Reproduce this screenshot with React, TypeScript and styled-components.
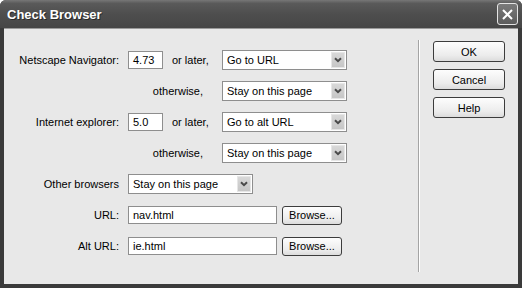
import styled, { createGlobalStyle } from 'styled-components';

const GlobalStyle = createGlobalStyle`
  html, body {
    margin: 0;
    padding: 0;
    background: #ffffff;
  }
  body {
    font-family: "Liberation Sans", Arial, sans-serif;
    font-size: 11px;
    color: #000;
  }
`;

const Window = styled.div`
  width: 522px;
  height: 288px;
  display: flex;
  flex-direction: column;
  background: #3a3a3a;
  border-radius: 6px 6px 0 0;
  overflow: hidden;
`;

const TitleBar = styled.div`
  height: 28px;
  flex: none;
  display: flex;
  align-items: center;
  justify-content: space-between;
  padding: 0 4px 0 7px;
  background: linear-gradient(#777777 0%, #5a5a5a 12%, #4e4e4e 50%, #464646 100%);
  color: #ffffff;
  font-family: "Liberation Sans", Arial, sans-serif;
  font-weight: bold;
  font-size: 13px;
  text-shadow: 1px 1px 0 #2a2a2a;
`;

const CloseButton = styled.div`
  width: 19px;
  height: 20px;
  border: 1px solid #e4e4e4;
  border-radius: 3px;
  background: linear-gradient(#7a7a7a, #5c5c5c);
  display: flex;
  align-items: center;
  justify-content: center;
`;

const Body = styled.div`
  flex: 1;
  margin: 0 4px 4px;
  background: #e8e8e8;
  display: flex;
  border-top: 1px solid #9a9a9a;
`;

const Form = styled.div`
  width: 414px;
  padding-top: 21px;
  display: flex;
  flex-direction: column;
  gap: 11px;
`;

const Row = styled.div`
  height: 20px;
  display: flex;
  align-items: center;
`;

const Label = styled.span<{ $w: number; $gap: number }>`
  width: ${(p) => p.$w}px;
  margin-right: ${(p) => p.$gap}px;
  text-align: right;
  white-space: nowrap;
`;

const Conj = styled.span`
  width: 39px;
  margin: 0 11px 0 9px;
  white-space: nowrap;
`;

const Input = styled.div<{ $w: number }>`
  width: ${(p) => p.$w}px;
  height: 18px;
  box-sizing: border-box;
  border: 1px solid #8e8e8e;
  background: #ffffff;
  padding: 0 4px;
  display: flex;
  align-items: center;
`;

const Select = styled.div<{ $w: number }>`
  width: ${(p) => p.$w}px;
  height: 20px;
  box-sizing: border-box;
  border: 1px solid #8e8e8e;
  background: #ffffff;
  padding: 1px 1px 1px 4px;
  display: flex;
  align-items: center;
  justify-content: space-between;
`;

const Arrow = styled.div`
  width: 14px;
  height: 16px;
  box-sizing: border-box;
  border: 1px solid #e6e6e6;
  background: linear-gradient(#d8d8d8, #c6c6c6);
  display: flex;
  align-items: center;
  justify-content: center;
`;

const Button = styled.div<{ $w: number; $h: number }>`
  width: ${(p) => p.$w}px;
  height: ${(p) => p.$h}px;
  box-sizing: border-box;
  border: 1px solid #3c3c3c;
  border-radius: 3px;
  background: linear-gradient(#fdfdfd, #ececec 70%, #dcdcdc);
  display: flex;
  align-items: center;
  justify-content: center;
`;

const BrowseButton = styled(Button)`
  margin-left: 5px;
`;

const Separator = styled.div`
  width: 1px;
  margin: 11px 0 12px;
  background: #a4a4a4;
  border-right: 1px solid #ffffff;
`;

const ButtonColumn = styled.div`
  padding: 12px 0 0 13px;
  display: flex;
  flex-direction: column;
  gap: 7px;
`;

function Chevron() {
  return (
    <svg width="8" height="6" viewBox="0 0 8 6">
      <path d="M1 1.2 L4 4.2 L7 1.2" fill="none" stroke="#4a4a4a" strokeWidth="2" />
    </svg>
  );
}

function Dropdown({ value, w }: { value: string; w: number }) {
  return (
    <Select $w={w}>
      <span>{value}</span>
      <Arrow>
        <Chevron />
      </Arrow>
    </Select>
  );
}

export default function App() {
  return (
    <>
      <GlobalStyle />
      <Window>
        <TitleBar>
          <span>Check Browser</span>
          <CloseButton>
            <svg width="11" height="11" viewBox="0 0 11 11">
              <path d="M1 1 L10 10 M10 1 L1 10" stroke="#ffffff" strokeWidth="2" />
            </svg>
          </CloseButton>
        </TitleBar>
        <Body>
          <Form>
            <Row>
              <Label $w={115} $gap={9}>Netscape Navigator:</Label>
              <Input $w={35}>4.73</Input>
              <Conj>or later,</Conj>
              <Dropdown value="Go to URL" w={125} />
            </Row>
            <Row>
              <Label $w={199} $gap={19}>otherwise,</Label>
              <Dropdown value="Stay on this page" w={125} />
            </Row>
            <Row>
              <Label $w={115} $gap={9}>Internet explorer:</Label>
              <Input $w={35}>5.0</Input>
              <Conj>or later,</Conj>
              <Dropdown value="Go to alt URL" w={125} />
            </Row>
            <Row>
              <Label $w={199} $gap={19}>otherwise,</Label>
              <Dropdown value="Stay on this page" w={125} />
            </Row>
            <Row>
              <Label $w={115} $gap={9}>Other browsers</Label>
              <Dropdown value="Stay on this page" w={125} />
            </Row>
            <Row>
              <Label $w={115} $gap={9}>URL:</Label>
              <Input $w={149}>nav.html</Input>
              <BrowseButton $w={60} $h={19}>Browse...</BrowseButton>
            </Row>
            <Row>
              <Label $w={115} $gap={9}>Alt URL:</Label>
              <Input $w={149}>ie.html</Input>
              <BrowseButton $w={60} $h={19}>Browse...</BrowseButton>
            </Row>
          </Form>
          <Separator />
          <ButtonColumn>
            <Button $w={72} $h={21}>OK</Button>
            <Button $w={72} $h={21}>Cancel</Button>
            <Button $w={72} $h={21}>Help</Button>
          </ButtonColumn>
        </Body>
      </Window>
    </>
  );
}
